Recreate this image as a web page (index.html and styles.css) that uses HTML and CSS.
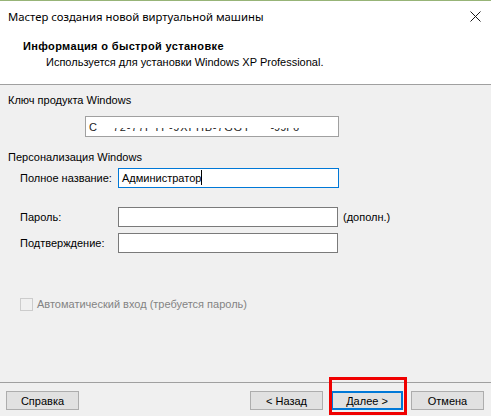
FILE: index.html
```html
<!DOCTYPE html>
<html lang="ru">
<head>
<meta charset="utf-8">
<title>Мастер создания новой виртуальной машины</title>
<link rel="stylesheet" href="styles.css">
</head>
<body>
<div class="topline"></div>
<header class="header">
  <div class="titlebar">
    <span class="title">Мастер создания новой виртуальной машины</span>
    <svg class="close" width="11" height="11" viewBox="0 0 11 11"><path d="M0.5 0.5 L10.5 10.5 M10.5 0.5 L0.5 10.5" stroke="#1a1a1a" stroke-width="1" fill="none"/></svg>
  </div>
  <div class="heading">Информация о быстрой установке</div>
  <div class="subheading">Используется для установки Windows XP Professional.</div>
</header>
<main class="content">
  <div class="group-label first">Ключ продукта Windows</div>
  <div class="field key"><span class="c">C</span><span class="masked m1">72-77PYF-9XFHB-7GGT</span><span class="masked m2">-99F6</span></div>
  <div class="group-label second">Персонализация Windows</div>
  <div class="row r-name"><span class="label">Полное название:</span><div class="field focused wide">Администратор<span class="caret"></span></div></div>
  <div class="row r-pass"><span class="label">Пароль:</span><div class="field"></div><span class="hint">(дополн.)</span></div>
  <div class="row r-conf"><span class="label">Подтверждение:</span><div class="field"></div></div>
  <div class="check"><span class="box"></span><span class="check-label">Автоматический вход (требуется пароль)</span></div>
</main>
<footer class="footer">
  <button class="btn">Справка</button>
  <div class="btn-group">
    <button class="btn">&lt; Назад</button>
    <button class="btn default">Далее &gt;</button>
    <button class="btn">Отмена</button>
  </div>
</footer>
<div class="highlight"></div>
</body>
</html>
```

FILE: styles.css
```css
* { box-sizing: border-box; }
html, body { margin: 0; padding: 0; }
body {
  width: 491px;
  height: 416px;
  overflow: hidden;
  background: #f0f0f0;
  font-family: "Liberation Sans", Arial, sans-serif;
  font-size: 11px;
  line-height: 16px;
  color: #000;
  display: flex;
  flex-direction: column;
  position: relative;
  white-space: nowrap;
}
.topline { height: 1px; background: #97b477; flex: none; }
.header {
  flex: none;
  height: 84px;
  background: #fff;
  border-bottom: 1px solid #a0a0a0;
}
.titlebar {
  height: 30px;
  padding: 8px 0 0 8px;
  display: flex;
  align-items: flex-start;
  justify-content: space-between;
}
.title { font-family: "Noto Sans", "Open Sans", sans-serif; font-size: 11.3px; }
.close { margin: 2px 10px 0 0; }
.heading { margin: 7px 0 0 23px; font-weight: bold; letter-spacing: 0.35px; }
.subheading { margin-left: 46px; }
.content { flex: 1; padding: 7px 0 0 0; }
.group-label { padding-left: 8px; }
.field {
  height: 20px;
  width: 220px;
  background: #fff;
  border: 1px solid #7a7a7a;
  padding: 1px 0 0 3px;
  line-height: 16px;
}
.key {
  margin: 8px 0 0 85px;
  width: 254px;
  height: 21px;
  border-color: #a0a0a0;
  display: flex;
  color: #222;
  padding-top: 2px;
}
.masked { position: relative; }
.masked::after {
  content: "";
  position: absolute;
  left: -2px; right: -2px; top: 0;
  height: 9px;
  background: #fff;
}
.m1 { margin-left: 16px; letter-spacing: 0.8px; }
.m2 { margin-left: 20px; }
.second { margin-top: 12px; }
.row { display: flex; align-items: center; padding-left: 20px; }
.label { width: 98px; flex: none; }
.r-name { margin-top: 3px; }
.r-pass { margin-top: 19px; }
.r-conf { margin-top: 6px; }
.wide { width: 221px; }
.focused { border-color: #0078d7; }
.caret { display: inline-block; width: 1px; height: 15px; background: #000; vertical-align: -3px; }
.hint { margin-left: 5px; }
.check { margin: 43px 0 0 20px; display: flex; align-items: center; gap: 4px; }
.box { width: 13px; height: 13px; border: 1px solid #cccccc; background: #f0f0f0; }
.check-label { color: #838383; }
.footer {
  flex: none;
  height: 34px;
  border-top: 1px solid #a0a0a0;
  padding: 8px 7px 0 6px;
  display: flex;
  justify-content: space-between;
  align-items: flex-start;
}
.btn-group { display: flex; gap: 8px; }
.btn {
  width: 73px;
  height: 19px;
  margin: 0;
  padding: 0;
  font: inherit;
  line-height: 16px;
  color: #000;
  background: #e1e1e1;
  border: 1px solid #adadad;
}
.btn.default { border: 2px solid #0078d7; width: 72px; }
.highlight {
  position: absolute;
  left: 329px;
  top: 377px;
  width: 78px;
  height: 38px;
  border: 3px solid #f00000;
}
```
